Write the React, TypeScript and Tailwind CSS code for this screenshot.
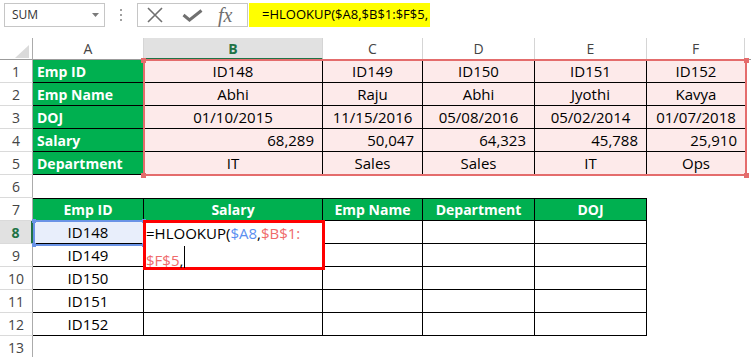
import React from 'react';

const hdrCell =
  "flex items-center justify-center border-r border-r-[#d5d5d5] border-b border-b-[#9b9b9b] text-[14px] text-[#444]";
const hdrSel =
  "flex items-center justify-center bg-[#e1e1e1] border-r border-r-[#d5d5d5] border-b-2 border-b-[#217346] text-[14px] font-bold text-[#217346]";
const rowHdr =
  "flex items-center justify-center border-r border-r-[#ababab] border-b border-b-[#dadada] text-[14px] text-[#444]";
const rowHdrSel =
  "flex items-center justify-center bg-[#e1e1e1] border-r-2 border-r-[#217346] border-b border-b-[#dadada] text-[14px] font-bold text-[#217346]";
const greenLabel =
  "flex items-center pl-[4px] bg-[#00b050] text-white font-bold text-[14px] border-r border-r-black border-b border-b-black";
const pinkCell =
  "flex items-center justify-center bg-[#fdeaea] border-r border-r-black border-b border-b-black text-[15px] text-black";
const pinkCellLast =
  "flex items-center justify-center bg-[#fdeaea] border-b border-b-black text-[15px] text-black";
const pinkNum =
  "flex items-center justify-end pr-[8px] bg-[#fdeaea] border-r border-r-black border-b border-b-black text-[15px] text-black";
const pinkNumLast =
  "flex items-center justify-end pr-[8px] bg-[#fdeaea] border-b border-b-black text-[15px] text-black";
const greenHead =
  "flex items-center justify-center bg-[#00b050] text-white font-bold text-[14px] border-t border-t-black border-r border-r-black border-b border-b-black";
const tblCell =
  "flex items-center justify-center border-r border-r-black border-b border-b-black text-[15px] text-black";
const tblCellSel =
  "flex items-center justify-center bg-[#e8eefb] border-r border-r-black border-b border-b-black text-[15px] text-black";

const topLabels = ['Emp ID', 'Emp Name', 'DOJ', 'Salary', 'Department'];
const topData = [
  ['ID148', 'ID149', 'ID150', 'ID151', 'ID152'],
  ['Abhi', 'Raju', 'Abhi', 'Jyothi', 'Kavya'],
  ['01/10/2015', '11/15/2016', '05/08/2016', '05/02/2014', '01/07/2018'],
  ['68,289', '50,047', '64,323', '45,788', '25,910'],
  ['IT', 'Sales', 'Sales', 'IT', 'Ops'],
];
const bottomHead = ['Emp ID', 'Salary', 'Emp Name', 'Department', 'DOJ'];
const ids = ['ID148', 'ID149', 'ID150', 'ID151', 'ID152'];

export default function App() {
  const cells: React.ReactNode[] = [];

  // header row
  cells.push(
    <div key="corner" className="flex items-end justify-end pr-[3px] pb-[1px] border-r border-r-[#ababab] border-b border-b-[#9b9b9b]">
      <svg width="14" height="13" viewBox="0 0 14 13">
        <path d="M14 0 L14 13 L0 13 Z" fill="#dadada" />
      </svg>
    </div>
  );
  ['A', 'B', 'C', 'D', 'E', 'F'].forEach((c) =>
    cells.push(
      <div key={'h' + c} className={c === 'B' ? hdrSel : hdrCell}>
        {c}
      </div>
    )
  );
  cells.push(<div key="hx" className="border-b border-b-[#9b9b9b]" />);

  // rows 1-5
  for (let r = 0; r < 5; r++) {
    cells.push(
      <div key={'r' + r} className={rowHdr}>
        {r + 1}
      </div>
    );
    cells.push(
      <div key={'l' + r} className={greenLabel}>
        {topLabels[r]}
      </div>
    );
    topData[r].forEach((v, i) => {
      const isNum = r === 3;
      const last = i === 4;
      const cls = isNum ? (last ? pinkNumLast : pinkNum) : last ? pinkCellLast : pinkCell;
      cells.push(
        <div key={'d' + r + i} className={cls}>
          {v}
        </div>
      );
    });
    cells.push(<div key={'x' + r} />);
  }

  // row 6
  cells.push(
    <div key="r6" className={rowHdr}>
      6
    </div>
  );
  for (let i = 0; i < 7; i++) cells.push(<div key={'e6' + i} />);

  // row 7
  cells.push(
    <div key="r7" className={rowHdr}>
      7
    </div>
  );
  bottomHead.forEach((h, i) =>
    cells.push(
      <div key={'bh' + i} className={greenHead}>
        {h}
      </div>
    )
  );
  cells.push(<div key="e7a" />);
  cells.push(<div key="e7b" />);

  // rows 8-12
  ids.forEach((id, r) => {
    const rn = r + 8;
    cells.push(
      <div key={'r' + rn} className={rn === 8 ? rowHdrSel : rowHdr}>
        {rn}
      </div>
    );
    cells.push(
      <div key={'a' + rn} className={rn === 8 ? tblCellSel : tblCell}>
        {id}
      </div>
    );
    for (let i = 0; i < 4; i++) cells.push(<div key={'b' + rn + i} className={tblCell} />);
    cells.push(<div key={'f' + rn} />);
    cells.push(<div key={'g' + rn} />);
  });

  // row 13
  cells.push(
    <div key="r13" className={rowHdr}>
      13
    </div>
  );
  for (let i = 0; i < 7; i++) cells.push(<div key={'e13' + i} />);

  return (
    <div className="w-[751px] h-[357px] overflow-hidden bg-white font-['Open_Sans',sans-serif] text-black">
      {/* formula bar */}
      <div className="h-[38px] flex items-start pt-[3px]">
        <div className="ml-[4px] w-[101px] h-[24px] border border-[#c6c6c6] flex items-center justify-between pl-[7px] pr-[5px]">
          <span className="text-[12px] text-[#333]">SUM</span>
          <svg width="7" height="4" viewBox="0 0 7 4">
            <path d="M0 0 H7 L3.5 4 Z" fill="#7a7a7a" />
          </svg>
        </div>
        <div className="w-[32px] h-[24px] flex flex-col items-center justify-center gap-[3px]">
          <div className="w-[2px] h-[2px] bg-[#a0a0a0]" />
          <div className="w-[2px] h-[2px] bg-[#a0a0a0]" />
          <div className="w-[2px] h-[2px] bg-[#a0a0a0]" />
        </div>
        <div className="w-[111px] h-[24px] border border-[#c6c6c6] flex items-center pl-[9px]">
          <svg width="16" height="16" viewBox="0 0 16 16">
            <path d="M1 1 L15 15 M15 1 L1 15" stroke="#707070" strokeWidth="1.6" fill="none" />
          </svg>
          <svg width="21" height="13" viewBox="0 0 21 13" className="ml-[19px]">
            <path d="M1.5 6 L7.5 11 L19.5 1.5" stroke="#707070" strokeWidth="3" fill="none" />
          </svg>
          <span className="ml-[15px] font-['Liberation_Serif',serif] italic text-[20px] leading-none text-[#707070]">
            fx
          </span>
        </div>
        <div className="ml-[1px] w-[181px] h-[24px] bg-[#ffff00] flex items-center pl-[13px] text-[13px] text-black">
          =HLOOKUP($A8,$B$1:$F$5,
        </div>
      </div>

      {/* sheet */}
      <div className="relative grid grid-cols-[33px_111px_179px_100px_112px_112px_98px_1fr] grid-rows-[22px_repeat(13,23px)]">
        {cells}

        {/* red range highlight B1:F5 */}
        <div className="absolute left-[143px] top-[21px] w-[604px] h-[117px] border-2 border-[#e46c6c] pointer-events-none">
          <div className="absolute -left-[4px] -top-[3px] w-[5px] h-[5px] bg-[#e46c6c]" />
          <div className="absolute -right-[4px] -top-[3px] w-[5px] h-[5px] bg-[#e46c6c]" />
          <div className="absolute -left-[4px] -bottom-[4px] w-[5px] h-[5px] bg-[#e46c6c]" />
          <div className="absolute -right-[4px] -bottom-[4px] w-[5px] h-[5px] bg-[#e46c6c]" />
        </div>

        {/* blue range highlight A8 */}
        <div className="absolute left-[33px] top-[182px] w-[112px] h-[26px] border-2 border-[#6a93e6] pointer-events-none">
          <div className="absolute -left-[3px] -top-[3px] w-[4px] h-[4px] bg-[#6a93e6]" />
          <div className="absolute -right-[3px] -top-[3px] w-[4px] h-[4px] bg-[#6a93e6]" />
          <div className="absolute -left-[3px] -bottom-[3px] w-[4px] h-[4px] bg-[#6a93e6]" />
          <div className="absolute -right-[3px] -bottom-[3px] w-[4px] h-[4px] bg-[#6a93e6]" />
        </div>

        {/* cell editor */}
        <div className="absolute left-[143px] top-[182px] w-[182px] h-[50px] border-[3px] border-[#ff0000] bg-white text-[15px] leading-[25px] whitespace-nowrap">
          <div className="-mt-[2px]">
            <span>=HLOOKUP(</span>
            <span className="text-[#5b8ff0]">$A8</span>
            <span>,</span>
            <span className="text-[#ef6b6b]">$B$1:</span>
            <br />
            <span className="text-[#ef6b6b]">$F$5</span>
            <span>,</span>
            <span className="inline-block w-px h-[22px] bg-black ml-[1px] align-[-2px]" />
          </div>
        </div>
      </div>
    </div>
  );
}
